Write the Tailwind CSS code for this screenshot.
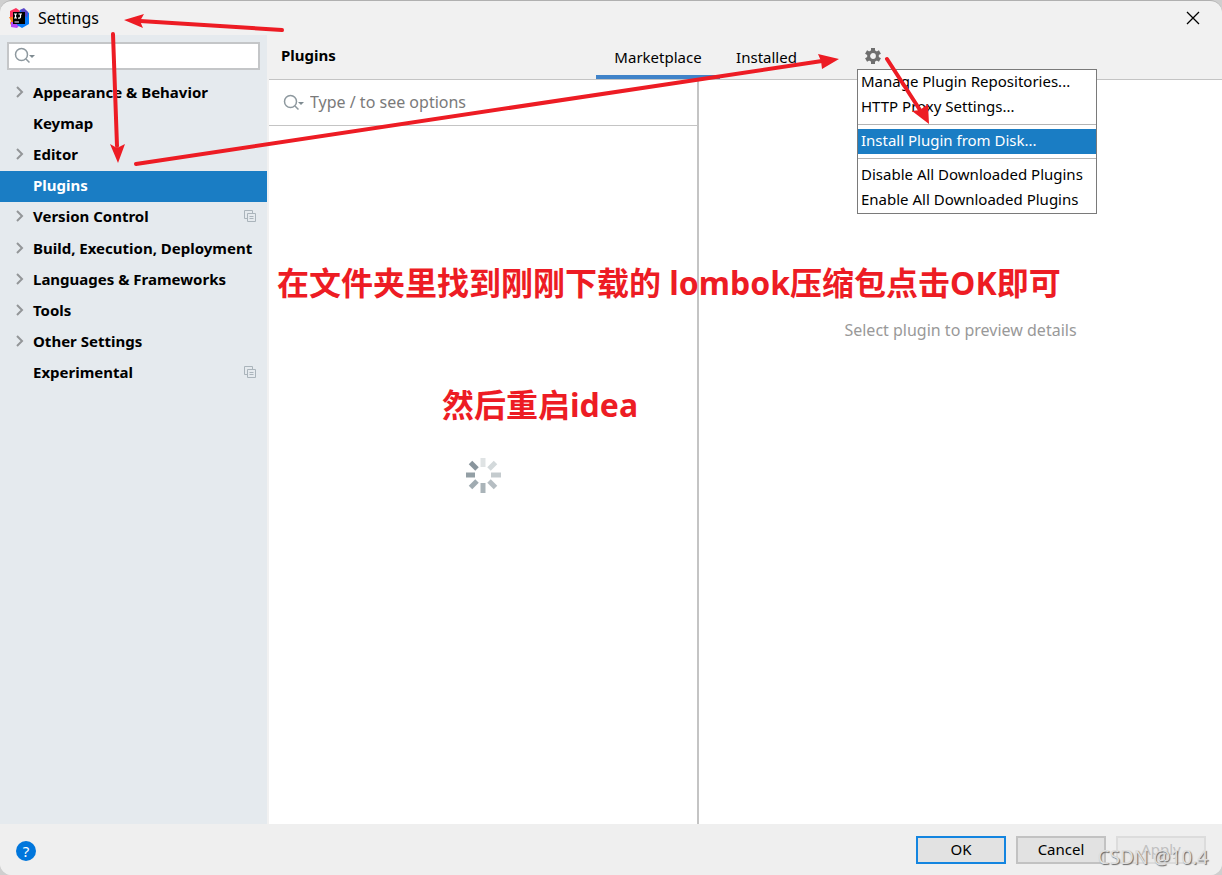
<!DOCTYPE html>
<html lang="zh">
<head>
  <meta charset="UTF-8">
  <meta name="viewport" content="width=device-width, initial-scale=1.0">
  <title>Settings</title>
  <script src="https://cdn.jsdelivr.net/npm/@tailwindcss/browser@4"></script>
</head>
<body class="bg-[#cfcfcf] font-['Noto_Sans','Noto_Sans_CJK_SC',sans-serif] text-[15px] leading-5 text-black">

  <div class="relative flex min-h-screen flex-col overflow-hidden rounded-xl border-t border-[#b0b0b0] bg-[#f1f1f1]">

    <!-- Title bar -->
    <header class="flex h-[34px] shrink-0 items-center pr-[22px] pl-2">
      <svg class="h-[22px] w-[22px]" viewBox="0 0 22 22">
        <path d="M2 4 8 1l7 5-5 9-8-3z" fill="#fe315d"/>
        <path d="M1 10l4 0 2 9-3 1-2-4 1-2z" fill="#f97a12"/>
        <path d="M3 15h12l-6 6-6-1z" fill="#b74af7"/>
        <path d="M12 3l4-1 5 4v11l-7 4-5-3z" fill="#087cfa"/>
        <path d="M12 3l4-2 4 4-1 6z" fill="#5a45c8"/>
        <path d="M5 5h12v12H5z" fill="#000"/>
        <path d="M6 7h3M7.500 7v4M6 11h3M10.500 7h3.500M12.500 7v3q0 1.200-2.500 1M6.500 15h4.500" fill="none" stroke="#fff" stroke-width="1.200"/>
      </svg>
      <h1 class="ml-2 text-base leading-5">Settings</h1>
      <button class="ml-auto" aria-label="Close">
        <svg class="h-[14px] w-[14px]" viewBox="0 0 14 14" fill="none" stroke="#000" stroke-width="1.300"><path d="M1 1l12 12M13 1L1 13"/></svg>
      </button>
    </header>

    <div class="flex flex-1">

      <!-- Sidebar -->
      <aside class="mr-0.5 w-[267px] shrink-0 bg-[#e5eaee] pt-[7px]">
        <label class="mx-[7px] flex h-7 items-center border-2 border-[#c4c6c8] bg-white pl-[5px]">
          <svg class="h-5 w-[22px] shrink-0" viewBox="0 0 22 20" fill="none" stroke="#8d989e" stroke-width="1.500"><circle cx="7.500" cy="8.500" r="6"/><path d="M12 13l3.500 3.500"/><path d="M15 9h6l-3 3z" fill="#7f8b91" stroke="none"/></svg>
          <input type="text" aria-label="Search settings" class="w-full min-w-0 outline-none">
        </label>
        <nav class="mt-[7px] grid h-[312px] grid-rows-10 font-bold">
          <a href="#" class="flex items-center pb-0.5 pl-4"><svg class="mr-[9px] h-3 w-2" viewBox="0 0 8 12" fill="none" stroke="#939698" stroke-width="2"><path d="M1 1l5 5-5 5"/></svg>Appearance &amp; Behavior</a>
          <a href="#" class="flex items-center pb-0.5 pl-[33px]">Keymap</a>
          <a href="#" class="flex items-center pb-0.5 pl-4"><svg class="mr-[9px] h-3 w-2" viewBox="0 0 8 12" fill="none" stroke="#939698" stroke-width="2"><path d="M1 1l5 5-5 5"/></svg>Editor</a>
          <a href="#" class="flex items-center bg-[#1a7dc4] pb-0.5 pl-[33px] text-white">Plugins</a>
          <a href="#" class="flex items-center pr-[11px] pb-0.5 pl-4"><svg class="mr-[9px] h-3 w-2" viewBox="0 0 8 12" fill="none" stroke="#939698" stroke-width="2"><path d="M1 1l5 5-5 5"/></svg>Version Control
            <svg class="ml-auto h-3 w-3" viewBox="0 0 12 12" fill="none" stroke="#aab4bb"><path d="M3 8.500H.5v-8h8V3M3.500 3.500h8v8h-8zM5.500 6.500h4M5.500 8.500h4"/></svg></a>
          <a href="#" class="flex items-center pb-0.5 pl-4 whitespace-nowrap"><svg class="mr-[9px] h-3 w-2" viewBox="0 0 8 12" fill="none" stroke="#939698" stroke-width="2"><path d="M1 1l5 5-5 5"/></svg>Build, Execution, Deployment</a>
          <a href="#" class="flex items-center pb-0.5 pl-4"><svg class="mr-[9px] h-3 w-2" viewBox="0 0 8 12" fill="none" stroke="#939698" stroke-width="2"><path d="M1 1l5 5-5 5"/></svg>Languages &amp; Frameworks</a>
          <a href="#" class="flex items-center pb-0.5 pl-4"><svg class="mr-[9px] h-3 w-2" viewBox="0 0 8 12" fill="none" stroke="#939698" stroke-width="2"><path d="M1 1l5 5-5 5"/></svg>Tools</a>
          <a href="#" class="flex items-center pb-0.5 pl-4"><svg class="mr-[9px] h-3 w-2" viewBox="0 0 8 12" fill="none" stroke="#939698" stroke-width="2"><path d="M1 1l5 5-5 5"/></svg>Other Settings</a>
          <a href="#" class="flex items-center pr-[11px] pb-0.5 pl-[33px]">Experimental
            <svg class="ml-auto h-3 w-3" viewBox="0 0 12 12" fill="none" stroke="#aab4bb"><path d="M3 8.500H.5v-8h8V3M3.500 3.500h8v8h-8zM5.500 6.500h4M5.500 8.500h4"/></svg></a>
        </nav>
      </aside>

      <!-- Plugins page -->
      <main class="flex min-w-0 flex-1 flex-col">
        <div class="flex h-[45px] shrink-0 border-b border-[#c4c4c4] pl-3">
          <h2 class="w-[315px] pt-[10px] font-bold">Plugins</h2>
          <div class="flex">
            <button class="w-[124px] border-b-4 border-[#4083c9] pt-[3px]">Marketplace</button>
            <button class="w-[93px] border-b-4 border-transparent pt-[3px]">Installed</button>
          </div>
          <div class="relative ml-[52px] pt-[13px]">
            <button class="block" aria-label="Manage plugins">
              <svg class="h-4 w-4" viewBox="0 0 16 16" fill="none" stroke="#6e6e6e"><path d="M8 0v3M8 13v3M1.070 4l2.600 1.500M12.330 10.500l2.600 1.500M1.070 12l2.600-1.500M12.330 5.500l2.600-1.500" stroke-width="4"/><circle cx="8" cy="8" r="4.400" stroke-width="3"/></svg>
            </button>
            <!-- Gear menu -->
            <div class="absolute top-[34px] -left-2 z-10 flex w-60 flex-col border border-[#7a7a7a] bg-white whitespace-nowrap">
              <button class="h-[25px] pb-[3px] pl-[3px] text-left">Manage Plugin Repositories...</button>
              <button class="h-[25px] pb-[3px] pl-[3px] text-left">HTTP Proxy Settings...</button>
              <hr class="my-1 border-[#b4b4b4]">
              <button class="h-[25px] bg-[#1a7dc4] pb-[3px] pl-[3px] text-left text-white">Install Plugin from Disk...</button>
              <hr class="my-1 border-[#b4b4b4]">
              <button class="h-[25px] pb-[3px] pl-[3px] text-left">Disable All Downloaded Plugins</button>
              <button class="h-[25px] pb-[3px] pl-[3px] text-left">Enable All Downloaded Plugins</button>
            </div>
          </div>
        </div>

        <div class="flex flex-1 bg-white">
          <section class="flex w-[430px] shrink-0 flex-col border-r-2 border-[#c4c4c4]">
            <label class="flex h-[46px] items-center border-b border-[#c4c4c4] pl-[14px]">
              <svg class="h-5 w-[22px] shrink-0" viewBox="0 0 22 20" fill="none" stroke="#8d989e" stroke-width="1.500"><circle cx="7.500" cy="8.500" r="6"/><path d="M12 13l3.500 3.500"/><path d="M15 9h6l-3 3z" fill="#7f8b91" stroke="none"/></svg>
              <input type="text" aria-label="Search plugins" placeholder="Type / to see options" class="ml-[5px] w-full min-w-0 pb-0.5 text-base leading-5 outline-none placeholder:text-[#7a7a7a]">
            </label>
            <div class="flex flex-1 items-center justify-center">
              <svg class="h-9 w-9" viewBox="-18 -18 36 36" fill="none" stroke-width="5">
                <path d="M0-17v9" stroke="#dfe3e4"/>
                <path d="M12.500-12.500l-6.500 6.500" stroke="#d3d9db"/>
                <path d="M18 0h-10" stroke="#c4cbce"/>
                <path d="M12.500 12.500l-6.500-6.500" stroke="#b5bdc2"/>
                <path d="M0 18v-10" stroke="#aab4b9"/>
                <path d="M-12.500 12.500l6.500-6.500" stroke="#a0abb1"/>
                <path d="M-17 0h9" stroke="#939fa5"/>
                <path d="M-12.500-12.500l6.500 6.500" stroke="#89959d"/>
              </svg>
            </div>
          </section>
          <section class="flex-1 pt-60 text-center text-base leading-5 text-[#999]">Select plugin to preview details</section>
        </div>
      </main>
    </div>

    <!-- Footer -->
    <footer class="flex h-[51px] shrink-0 items-center gap-[10px] bg-[#efefef] pr-4 pl-4">
      <button class="mt-[3px] mr-auto h-5 w-5 rounded-full bg-[#0076dc] text-white" aria-label="Help">?</button>
      <button class="h-7 w-[90px] border-2 border-[#1485e0] bg-[#e2e2e2] pb-0.5">OK</button>
      <button class="h-7 w-[90px] border-2 border-[#c2c2c2] bg-[#e2e2e2] pb-0.5">Cancel</button>
      <button class="h-7 w-[90px] border-2 border-[#dcdcdc] bg-[#eaeaea] pb-0.5 text-[#c0c0c0]" disabled>Apply</button>
    </footer>

    <!-- Notes drawn over the window -->
    <p class="absolute top-[262px] left-[277px] z-20 text-[32px] leading-10 font-bold whitespace-nowrap text-[#ed1c24]">在文件夹里找到刚刚下载的 lombok压缩包点击OK即可</p>
    <p class="absolute top-[384px] left-[442px] z-20 text-[32px] leading-10 font-bold whitespace-nowrap text-[#ed1c24]">然后重启idea</p>
    <svg class="pointer-events-none absolute -top-px left-0 z-20 h-[875px] w-[1222px]" viewBox="0 0 1222 875" fill="#ed1c24" stroke="#ed1c24" stroke-width="4" stroke-linecap="round">
      <path d="M282 30L140 21M113 34l4 112M136 164L822 61M887 59l33 51"/>
      <path d="M124 20l20-6-4 7 3 7zM118 163l-8-19 7 4 8-4zM839 59l-21-5 3 7 1 8zM929 124l-17-13 8-1 8-6z" stroke="none"/>
    </svg>
    <p class="absolute right-[14px] bottom-1 z-20 text-[19px] leading-7 text-[#dedede] [text-shadow:1px_1px_1px_#666]">CSDN @10.4</p>
  </div>

</body>
</html>
